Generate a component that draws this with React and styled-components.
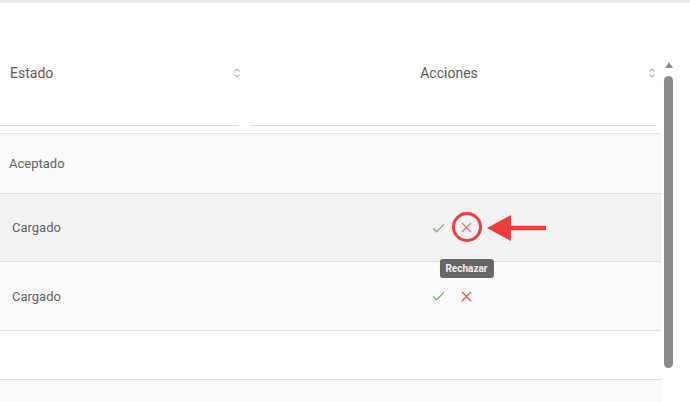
import styled, { createGlobalStyle } from "styled-components";

const GlobalStyle = createGlobalStyle`
  html, body {
    margin: 0;
    padding: 0;
    background: #ffffff;
    font-family: Roboto, "Noto Sans", "Liberation Sans", sans-serif;
  }
`;

const rows = [
  { estado: "Aceptado", height: 59, bg: "#fafafa", indent: 9, actions: false },
  { estado: "Cargado", height: 67, bg: "#f2f2f2", indent: 12, actions: true, marked: true },
  { estado: "Cargado", height: 68, bg: "#fafafa", indent: 12, actions: true },
  { estado: "", height: 48, bg: "#ffffff", indent: 12, actions: false },
  { estado: "", height: 40, bg: "#fafafa", indent: 12, actions: false },
];

const SortIcon = () => (
  <svg width="8" height="12" viewBox="0 0 8 12">
    <path d="M1.5 4.5 L4 2 L6.5 4.5" fill="none" stroke="#b5b5b5" strokeWidth="1.1" />
    <path d="M1.5 7.5 L4 10 L6.5 7.5" fill="none" stroke="#b5b5b5" strokeWidth="1.1" />
  </svg>
);

const CheckIcon = () => (
  <svg width="13" height="10" viewBox="0 0 13 10">
    <path d="M1 5.2 L4.6 8.8 L12 1.2" fill="none" stroke="#79b87a" strokeWidth="1.3" />
  </svg>
);

const CrossIcon = ({ color }) => (
  <svg width="11" height="11" viewBox="0 0 11 11">
    <path d="M1 1 L10 10 M10 1 L1 10" fill="none" stroke={color} strokeWidth="1.3" />
  </svg>
);

const App = () => {
  return (
    <>
      <GlobalStyle />
      <Page>
        <TopEdge />
        <Body>
          <Table>
            <Header>
              <HeadCell>
                <HeadLabel>
                  <span>Estado</span>
                  <SortIcon />
                </HeadLabel>
                <FilterLine $right={6} />
              </HeadCell>
              <HeadCell>
                <HeadLabel $center>
                  <span>Acciones</span>
                  <SortSlot>
                    <SortIcon />
                  </SortSlot>
                </HeadLabel>
                <FilterLine $left={5} $right={5} />
              </HeadCell>
            </Header>
            {rows.map((row, i) => (
              <Row key={i} $height={row.height} $bg={row.bg}>
                <Cell $indent={row.indent}>{row.estado}</Cell>
                <ActionCell>
                  {row.actions && (
                    <ActionGroup>
                      <IconButton>
                        <CheckIcon />
                      </IconButton>
                      <IconButton>
                        <CrossIcon color={row.marked ? "#de7a7a" : "#e04f4f"} />
                        {row.marked && (
                          <>
                            <Ring />
                            <Arrow>
                              <svg width="60" height="28" viewBox="0 0 60 28">
                                <polygon points="0,14 24,1 24,27" fill="#f23c3c" />
                                <rect x="23" y="11.8" width="36" height="4.4" fill="#f23c3c" />
                              </svg>
                            </Arrow>
                            <Tooltip>Rechazar</Tooltip>
                          </>
                        )}
                      </IconButton>
                    </ActionGroup>
                  )}
                </ActionCell>
              </Row>
            ))}
          </Table>
          <ScrollRail>
            <ScrollArrow />
            <ScrollThumb />
          </ScrollRail>
        </Body>
      </Page>
    </>
  );
};

export default App;

const Page = styled.div`
  width: 690px;
  height: 402px;
  overflow: hidden;
  background: #ffffff;
`;

const TopEdge = styled.div`
  height: 2px;
  background: #e8e8e8;
  border-bottom: 1px solid #f3f3f3;
`;

const Body = styled.div`
  display: flex;
`;

const Table = styled.div`
  width: 661px;
  display: flex;
  flex-direction: column;
`;

const Header = styled.div`
  display: grid;
  grid-template-columns: 245px 416px;
  height: 130px;
  border-bottom: 1px solid #e4e4e4;
  background: #ffffff;
`;

const HeadCell = styled.div`
  display: flex;
  flex-direction: column;
  padding-top: 40px;
`;

const HeadLabel = styled.div`
  display: flex;
  align-items: center;
  justify-content: ${(p) => (p.$center ? "center" : "space-between")};
  position: relative;
  height: 60px;
  padding: 0 4px 0 10px;
  font-size: 14px;
  color: #5a5a5a;

  span {
    margin-left: ${(p) => (p.$center ? "-14px" : "0")};
  }
`;

const SortSlot = styled.div`
  position: absolute;
  right: 5px;
  top: 24px;
  display: flex;
`;

const FilterLine = styled.div`
  height: 22px;
  margin: 0 ${(p) => p.$right || 0}px 0 ${(p) => p.$left || 0}px;
  border-bottom: 1px solid #dedede;
`;

const Row = styled.div`
  display: grid;
  grid-template-columns: 245px 416px;
  align-items: center;
  height: ${(p) => p.$height}px;
  background: ${(p) => p.$bg};
  border-bottom: 1px solid #e0e0e0;
`;

const Cell = styled.div`
  padding-left: ${(p) => p.$indent}px;
  font-size: 13px;
  color: #626262;
`;

const ActionCell = styled.div`
  display: flex;
  justify-content: center;
  padding-right: 2px;
`;

const ActionGroup = styled.div`
  display: flex;
  align-items: center;
  gap: 16px;
`;

const IconButton = styled.div`
  position: relative;
  display: flex;
  align-items: center;
  justify-content: center;
  height: 14px;
`;

const Ring = styled.div`
  position: absolute;
  left: 50%;
  top: 50%;
  width: 24px;
  height: 24px;
  margin: -15.5px 0 0 -15px;
  border: 3.5px solid #f23c3c;
  border-radius: 50%;
`;

const Arrow = styled.div`
  position: absolute;
  left: 26px;
  top: -7px;
  display: flex;
`;

const Tooltip = styled.div`
  position: absolute;
  top: 38px;
  left: 50%;
  transform: translateX(-50%);
  padding: 3px 6px;
  border-radius: 3px;
  background: #666666;
  color: #f4f4f4;
  font-size: 10px;
  font-weight: 700;
  white-space: nowrap;
  line-height: 13px;
`;

const ScrollRail = styled.div`
  display: flex;
  flex-direction: column;
  align-items: center;
  width: 9px;
  margin-left: 3px;
  padding-top: 59px;
`;

const ScrollArrow = styled.div`
  width: 0;
  height: 0;
  border-left: 4px solid transparent;
  border-right: 4px solid transparent;
  border-bottom: 6px solid #8a8a8a;
`;

const ScrollThumb = styled.div`
  margin-top: 8px;
  width: 9px;
  height: 292px;
  border-radius: 5px;
  background: #8a8a8a;
`;
